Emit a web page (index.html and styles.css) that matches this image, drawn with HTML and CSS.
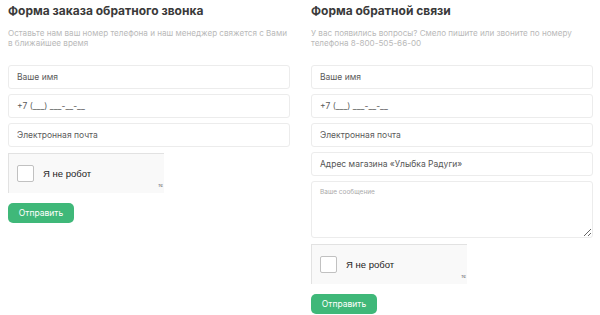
FILE: index.html
```html
<!DOCTYPE html>
<html lang="ru">

<head>
    <meta charset="UTF-8">
    <meta name="viewport" content="width=device-width, initial-scale=1.0">
    <title>Обратная связь</title>
    <link rel="stylesheet" href="styles.css">
</head>

<body>
    <div class="forms">
        <form class="form">
            <h2 class="form-title">Форма заказа обратного звонка</h2>
            <p class="form-desc">Оставьте нам ваш номер телефона и наш менеджер свяжется с Вами в ближайшее время</p>

            <input class="field" type="text" placeholder="Ваше имя">
            <input class="field" type="text" placeholder="+7 (___) ___-__-__">
            <input class="field" type="email" placeholder="Электронная почта">

            <div class="captcha">
                <span class="captcha-box"></span>
                <span class="captcha-label">Я не робот</span>
                <span class="captcha-mark">те</span>
            </div>

            <button class="submit" type="button">Отправить</button>
        </form>

        <form class="form">
            <h2 class="form-title">Форма обратной связи</h2>
            <p class="form-desc">У вас появились вопросы? Смело пишите или звоните по номеру телефона 8-800-505-66-00</p>

            <input class="field" type="text" placeholder="Ваше имя">
            <input class="field" type="text" placeholder="+7 (___) ___-__-__">
            <input class="field" type="email" placeholder="Электронная почта">
            <div class="field field-select">Адрес магазина «Улыбка Радуги»</div>
            <textarea class="field field-area" placeholder="Ваше сообщение"></textarea>

            <div class="captcha">
                <span class="captcha-box"></span>
                <span class="captcha-label">Я не робот</span>
                <span class="captcha-mark">те</span>
            </div>

            <button class="submit" type="button">Отправить</button>
        </form>
    </div>
</body>

</html>
```

FILE: styles.css
```css
body {
    margin: 0;
    padding: 0 8px;
    background: #fff;
    font-family: Inter, "Noto Sans", sans-serif;
    color: #333;
}

.forms {
    display: grid;
    grid-template-columns: 282px 282px;
    column-gap: 21px;
}

.form {
    display: flex;
    flex-direction: column;
    align-items: flex-start;
}

.form-title {
    margin: 3px 0 0;
    font-size: 12px;
    line-height: 15px;
    font-weight: 700;
    color: #3a3a3a;
}

.form-desc {
    margin: 11px 0 0;
    height: 24px;
    margin-bottom: 12px;
    font-size: 8.1px;
    line-height: 9.5px;
    color: #b9b9b9;
}

.field {
    box-sizing: border-box;
    width: 100%;
    height: 24px;
    margin: 0 0 5px;
    padding: 0 8px;
    border: 1px solid #ececec;
    border-radius: 3px;
    background: #fff;
    font-family: inherit;
    font-size: 8.5px;
    color: #555;
    outline: none;
}

.field::placeholder {
    color: #5a5a5a;
}

.field-select {
    display: flex;
    align-items: center;
}

.field-area {
    height: 57px;
    padding: 6px 8px;
    font-size: 6.5px;
    resize: vertical;
}

.field-area::placeholder {
    color: #aaa;
}

.captcha {
    position: relative;
    box-sizing: border-box;
    width: 156px;
    height: 40px;
    margin-top: 1px;
    overflow: hidden;
    background: #f9f9f9;
    border-top: 1px solid #e2e2e2;
    border-left: 1px solid #e2e2e2;
    display: flex;
    align-items: center;
    padding-left: 8px;
}

.captcha-box {
    box-sizing: border-box;
    width: 17px;
    height: 17px;
    border: 1px solid #c1c1c1;
    border-radius: 2px;
    background: #fff;
}

.captcha-label {
    margin-left: 9px;
    font-family: "Liberation Sans", Arial, sans-serif;
    font-size: 9.5px;
    color: #222;
}

.captcha-mark {
    position: absolute;
    right: 1px;
    top: 29px;
    font-size: 4.5px;
    color: #555;
}

.submit {
    margin-top: 10px;
    width: 66px;
    height: 20px;
    border: none;
    border-radius: 5px;
    background: #3fb879;
    color: #fff;
    font-family: inherit;
    font-size: 8.5px;
    cursor: pointer;
}
```
